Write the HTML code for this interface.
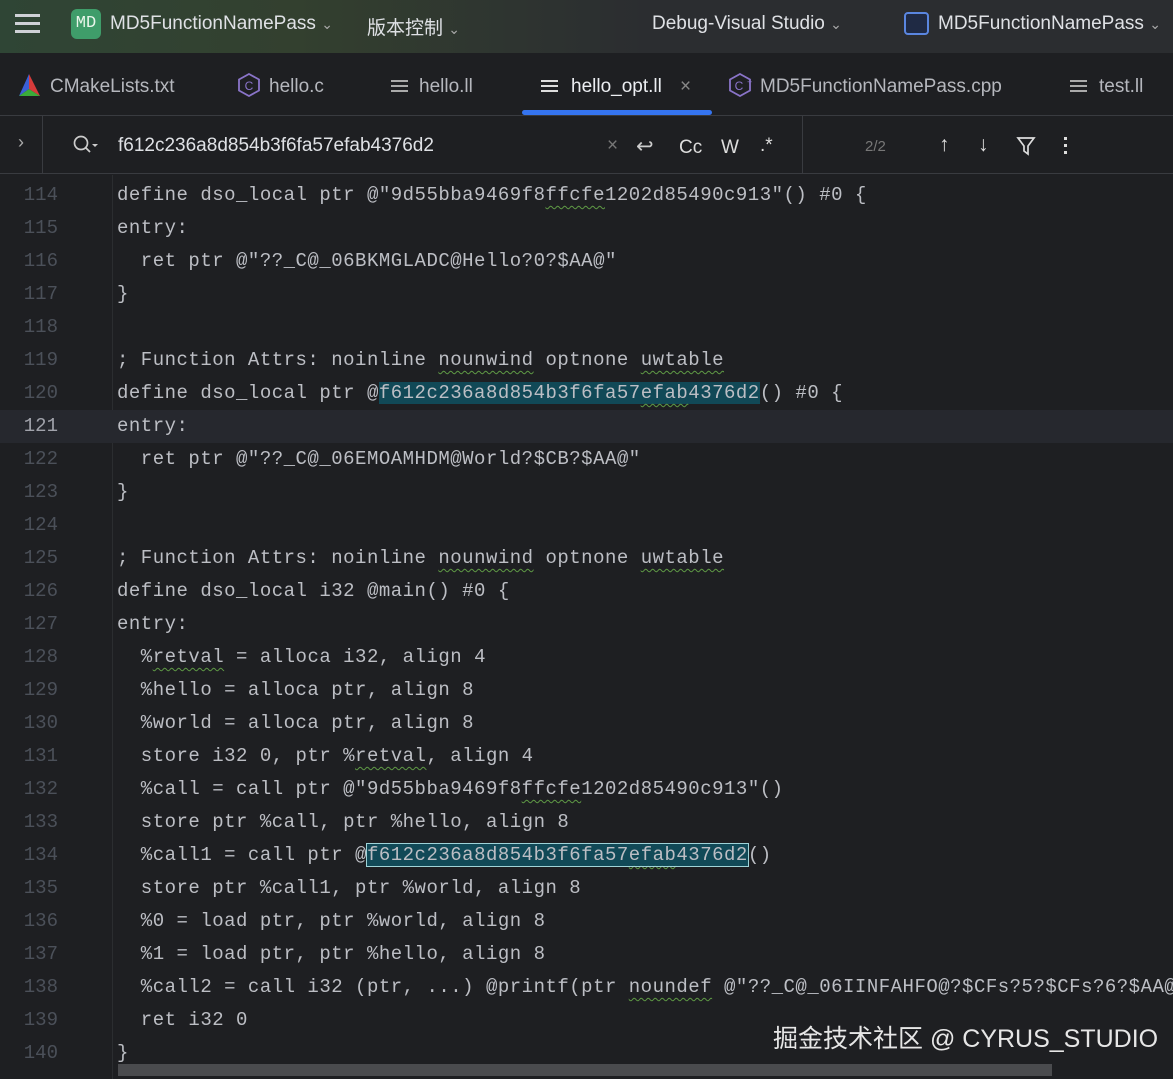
<!DOCTYPE html>
<html><head><meta charset="utf-8">
<style>
*{margin:0;padding:0;box-sizing:border-box}
body{width:1173px;height:1079px;overflow:hidden;background:#1e1f22;font-family:"Liberation Sans","Noto Sans CJK SC",sans-serif;color:#dfe1e5;position:relative}
.title{position:absolute;left:0;top:0;width:1173px;height:53px;background:linear-gradient(90deg,#2f4535 0%,#33402f 25%,#2b2d30 55%,#2b2d30 100%);}
.t{position:absolute;top:13px;font-size:19px;color:#dfe1e5;white-space:nowrap}
.tabs{position:absolute;left:0;top:53px;width:1173px;height:63px;background:#1e1f22;border-bottom:1px solid #393b40}
.tab{position:absolute;top:23px;font-size:19px;color:#b5b7bd;white-space:nowrap}
.search{position:absolute;left:0;top:116px;width:1173px;height:58px;background:#1e1f22;border-bottom:1px solid #393b40}
.code{position:absolute;left:0;top:179px;width:1173px;font-family:"Liberation Mono",monospace;font-size:19px;letter-spacing:0.5px}
.ln{height:33px;line-height:33px;position:relative;white-space:pre}
.ln .n{position:absolute;left:0;width:58px;text-align:right;color:#4b5059;letter-spacing:0}
.ln .c{position:absolute;left:117px;color:#bcbec4}
.cur{background:#26282e}
.cur .n{color:#a1a3ab}
.hl{background:#114957}
.box{background:#114957;outline:1.5px solid #9fd3d8}
.w{text-decoration:underline wavy #5f9a45;text-underline-offset:5px;text-decoration-thickness:1px}
</style></head><body>
<div class="title">
  <div style="position:absolute;left:15px;top:14px;width:25px;height:3px;background:#cfd1d6;box-shadow:0 8px 0 #cfd1d6,0 16px 0 #cfd1d6"></div>
  <div style="position:absolute;left:71px;top:9px;width:30px;height:30px;border-radius:6px;background:#3f9d6a;color:#e8f5ea;font-family:'Liberation Mono',monospace;font-size:17px;line-height:30px;text-align:center">MD</div>
  <div class="t" style="left:110px">MD5FunctionNamePass <span style="font-size:14px;color:#aaa">&#8964;</span></div>
  <div class="t" style="left:367px">版本控制 <span style="font-size:14px;color:#aaa">&#8964;</span></div>
  <div class="t" style="left:652px">Debug-Visual Studio <span style="font-size:14px;color:#aaa">&#8964;</span></div>
  <div style="position:absolute;left:904px;top:12px;width:25px;height:23px;border:2px solid #5a86e0;border-radius:4px;background:#1f2a44"></div>
  <div class="t" style="left:938px">MD5FunctionNamePass <span style="font-size:14px;color:#aaa">&#8964;</span></div>
</div>
<div class="tabs">
  <svg style="position:absolute;left:19px;top:21px" width="21" height="22" viewBox="0 0 21 22"><polygon points="10,0 0,22 10,15" fill="#3b5fd6"/><polygon points="10,0 21,22 10,15" fill="#d63b3b"/><polygon points="0,22 21,22 10,15" fill="#3aaa3a"/></svg>
  <div class="tab" style="left:50px">CMakeLists.txt</div>
  <svg style="position:absolute;left:238px;top:20px" width="22" height="24" viewBox="0 0 22 24"><polygon points="11,1 21,6.5 21,17.5 11,23 1,17.5 1,6.5" fill="none" stroke="#8a74c9" stroke-width="1.8"/><text x="11" y="17" font-size="12" fill="#8a74c9" text-anchor="middle" font-family="Liberation Sans">C</text></svg>
  <div class="tab" style="left:269px">hello.c</div>
  <div style="position:absolute;left:391px;top:27px;width:17px;height:2px;background:#aaa;box-shadow:0 5px 0 #aaa,0 10px 0 #aaa"></div>
  <div class="tab" style="left:419px">hello.ll</div>
  <div style="position:absolute;left:541px;top:27px;width:17px;height:2px;background:#ddd;box-shadow:0 5px 0 #ddd,0 10px 0 #ddd"></div>
  <div class="tab" style="left:571px;color:#eceef2">hello_opt.ll</div>
  <div class="tab" style="left:680px;color:#888">×</div>
  <div style="position:absolute;left:522px;top:57px;width:190px;height:5px;background:#3574f0;border-radius:3px"></div>
  <svg style="position:absolute;left:729px;top:20px" width="24" height="24" viewBox="0 0 24 24"><polygon points="11,1 21,6.5 21,17.5 11,23 1,17.5 1,6.5" fill="none" stroke="#8a74c9" stroke-width="1.8"/><text x="10" y="17" font-size="12" fill="#8a74c9" text-anchor="middle" font-family="Liberation Sans">C</text><text x="18" y="12" font-size="9" fill="#8a74c9" font-family="Liberation Sans">+</text></svg>
  <div class="tab" style="left:760px">MD5FunctionNamePass.cpp</div>
  <div style="position:absolute;left:1070px;top:27px;width:17px;height:2px;background:#aaa;box-shadow:0 5px 0 #aaa,0 10px 0 #aaa"></div>
  <div class="tab" style="left:1099px">test.ll</div>
</div>
<div class="search">
  <div style="position:absolute;left:42px;top:0;width:1px;height:58px;background:#393b40"></div>
  <div style="position:absolute;left:18px;top:16px;font-size:18px;color:#aaa">›</div>
  <svg style="position:absolute;left:73px;top:19px" width="26" height="22" viewBox="0 0 26 22"><circle cx="8" cy="8" r="6.5" fill="none" stroke="#ccc" stroke-width="1.7"/><line x1="12.5" y1="12.5" x2="17" y2="17" stroke="#ccc" stroke-width="1.8"/><polygon points="19,9 25,9 22,12" fill="#ccc"/></svg>
  <div style="position:absolute;left:118px;top:19px;font-size:19px;color:#dfe1e5">f612c236a8d854b3f6fa57efab4376d2</div>
  <div style="position:absolute;left:607px;top:19px;font-size:19px;color:#777">×</div>
  <div style="position:absolute;left:636px;top:18px;font-size:21px;color:#ccc">↩</div>
  <div style="position:absolute;left:679px;top:21px;font-size:19px;color:#ddd">Cc</div>
  <div style="position:absolute;left:721px;top:21px;font-size:19px;color:#ddd">W</div>
  <div style="position:absolute;left:760px;top:19px;font-size:19px;color:#ddd">.*</div>
  <div style="position:absolute;left:802px;top:0;width:1px;height:58px;background:#393b40"></div>
  <div style="position:absolute;left:865px;top:22px;font-size:15px;color:#777">2/2</div>
  <div style="position:absolute;left:939px;top:17px;font-size:21px;color:#ddd">↑</div>
  <div style="position:absolute;left:978px;top:17px;font-size:21px;color:#ddd">↓</div>
  <svg style="position:absolute;left:1016px;top:20px" width="20" height="20" viewBox="0 0 20 20"><path d="M2 2H18L12 10V18L8 15V10Z" fill="none" stroke="#ddd" stroke-width="1.7"/></svg>
  <div style="position:absolute;left:1064px;top:21px;width:3px;height:3px;background:#ddd;box-shadow:0 7px 0 #ddd,0 14px 0 #ddd"></div>
</div>
<div style="position:absolute;left:112px;top:175px;width:1px;height:904px;background:#2b2d30"></div>
<div class="code">
<div class="ln"><span class="n">114</span><span class="c">define dso_local ptr @"9d55bba9469f8<span class="w">ffcfe</span>1202d85490c913"() #0 {</span></div>
<div class="ln"><span class="n">115</span><span class="c">entry:</span></div>
<div class="ln"><span class="n">116</span><span class="c">  ret ptr @"??_C@_06BKMGLADC@Hello?0?$AA@"</span></div>
<div class="ln"><span class="n">117</span><span class="c">}</span></div>
<div class="ln"><span class="n">118</span><span class="c"></span></div>
<div class="ln"><span class="n">119</span><span class="c">; Function Attrs: noinline <span class="w">nounwind</span> optnone <span class="w">uwtable</span></span></div>
<div class="ln"><span class="n">120</span><span class="c">define dso_local ptr @<span class="hl">f612c236a8d854b3f6fa57<span class="w">efab</span>4376d2</span>() #0 {</span></div>
<div class="ln cur"><span class="n">121</span><span class="c">entry:</span></div>
<div class="ln"><span class="n">122</span><span class="c">  ret ptr @"??_C@_06EMOAMHDM@World?$CB?$AA@"</span></div>
<div class="ln"><span class="n">123</span><span class="c">}</span></div>
<div class="ln"><span class="n">124</span><span class="c"></span></div>
<div class="ln"><span class="n">125</span><span class="c">; Function Attrs: noinline <span class="w">nounwind</span> optnone <span class="w">uwtable</span></span></div>
<div class="ln"><span class="n">126</span><span class="c">define dso_local i32 @main() #0 {</span></div>
<div class="ln"><span class="n">127</span><span class="c">entry:</span></div>
<div class="ln"><span class="n">128</span><span class="c">  %<span class="w">retval</span> = alloca i32, align 4</span></div>
<div class="ln"><span class="n">129</span><span class="c">  %hello = alloca ptr, align 8</span></div>
<div class="ln"><span class="n">130</span><span class="c">  %world = alloca ptr, align 8</span></div>
<div class="ln"><span class="n">131</span><span class="c">  store i32 0, ptr %<span class="w">retval</span>, align 4</span></div>
<div class="ln"><span class="n">132</span><span class="c">  %call = call ptr @"9d55bba9469f8<span class="w">ffcfe</span>1202d85490c913"()</span></div>
<div class="ln"><span class="n">133</span><span class="c">  store ptr %call, ptr %hello, align 8</span></div>
<div class="ln"><span class="n">134</span><span class="c">  %call1 = call ptr @<span class="box">f612c236a8d854b3f6fa57<span class="w">efab</span>4376d2</span>()</span></div>
<div class="ln"><span class="n">135</span><span class="c">  store ptr %call1, ptr %world, align 8</span></div>
<div class="ln"><span class="n">136</span><span class="c">  %0 = load ptr, ptr %world, align 8</span></div>
<div class="ln"><span class="n">137</span><span class="c">  %1 = load ptr, ptr %hello, align 8</span></div>
<div class="ln"><span class="n">138</span><span class="c">  %call2 = call i32 (ptr, ...) @printf(ptr <span class="w">noundef</span> @"??_C@_06IINFAHFO@?$CFs?5?$CFs?6?$AA@"</span></div>
<div class="ln"><span class="n">139</span><span class="c">  ret i32 0</span></div>
<div class="ln"><span class="n">140</span><span class="c">}</span></div>
</div>
<div style="position:absolute;left:773px;top:1019px;font-size:25px;color:#e6e6e6;white-space:nowrap;font-family:'Liberation Sans','Noto Sans CJK SC',sans-serif">掘金技术社区 @ CYRUS_STUDIO</div>
<div style="position:absolute;left:118px;top:1064px;width:934px;height:12px;background:#4a4b4e"></div>
</body></html>
